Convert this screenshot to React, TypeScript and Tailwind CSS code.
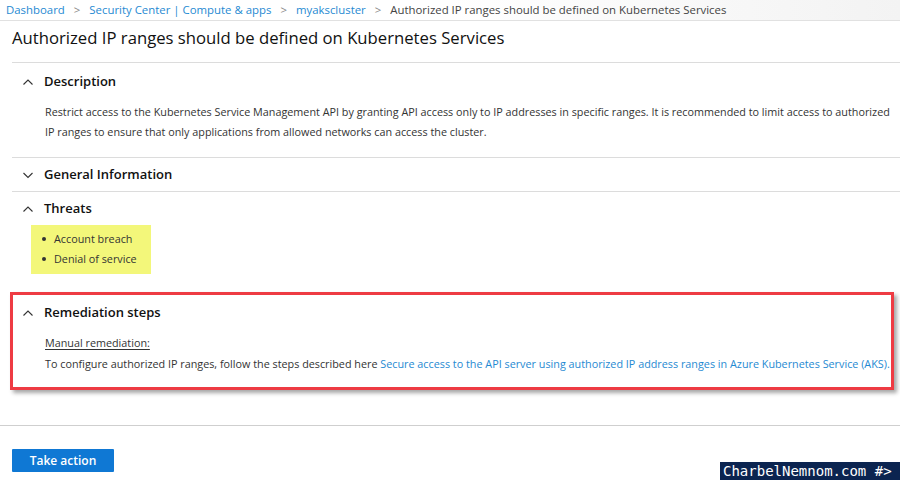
import { ReactNode } from 'react';

function Chevron({ up }: { up: boolean }) {
  return (
    <svg width="12" height="12" viewBox="0 0 12 12" className="shrink-0">
      <path
        d={up ? 'M1.5 8.5 L6 4 L10.5 8.5' : 'M1.5 4 L6 8.5 L10.5 4'}
        fill="none"
        stroke="#333"
        strokeWidth="1.1"
      />
    </svg>
  );
}

function SectionHeader({ title, up = true }: { title: string; up?: boolean }) {
  return (
    <div className="flex items-center gap-[10px] pl-[10px] h-[33px]">
      <Chevron up={up} />
      <span className="text-[13px] font-semibold text-[#111]">{title}</span>
    </div>
  );
}

function Section({ children, last = false }: { children: ReactNode; last?: boolean }) {
  return <div className={last ? '' : 'border-b border-[#dcdcdc]'}>{children}</div>;
}

export default function App() {
  return (
    <div
      className="w-[900px] h-[480px] bg-white overflow-hidden relative text-[#323130]"
      style={{ fontFamily: '"Segoe UI", "Open Sans", "Noto Sans", sans-serif' }}
    >
      {/* breadcrumb */}
      <div className="h-[21px] flex items-center gap-[9px] px-[6px] text-[11.4px] border-b border-[#e1e1e1] bg-gradient-to-r from-white via-white to-[#f3f3f3]">
        <span className="text-[#1f8ad2]">Dashboard</span>
        <span className="text-[#888]">&gt;</span>
        <span className="text-[#1f8ad2]">Security Center | Compute &amp; apps</span>
        <span className="text-[#888]">&gt;</span>
        <span className="text-[#1f8ad2]">myakscluster</span>
        <span className="text-[#888]">&gt;</span>
        <span className="text-[#444]">Authorized IP ranges should be defined on Kubernetes Services</span>
      </div>

      <h1 className="pl-[12px] pt-[4px] h-[41px] text-[16.7px] text-[#111]">
        Authorized IP ranges should be defined on Kubernetes Services
      </h1>

      <div className="ml-[12px] border-t border-[#dcdcdc]">
        <Section>
          <div className="pt-[2px]">
            <SectionHeader title="Description" />
          </div>
          <div className="pl-[33px] pr-[8px] pt-[4px] pb-[15px] text-[10.8px] leading-[20px] text-[#333]">
            Restrict access to the Kubernetes Service Management API by granting API access only to IP addresses in specific ranges. It is recommended to limit access to authorized IP ranges to ensure that only applications from allowed networks can access the cluster.
          </div>
        </Section>
        <Section>
          <SectionHeader title="General Information" up={false} />
        </Section>
        <Section last>
          <SectionHeader title="Threats" />
          <div className="ml-[19px] w-[120px] bg-[#f3f77a] pt-[4px] pb-[5px] pl-[11px] text-[10.8px] leading-[20px] text-[#333]">
            <div className="flex items-center gap-[8px]">
              <span className="w-[4px] h-[4px] rounded-full bg-[#333]" />
              Account breach
            </div>
            <div className="flex items-center gap-[8px]">
              <span className="w-[4px] h-[4px] rounded-full bg-[#333]" />
              Denial of service
            </div>
          </div>
        </Section>
      </div>

      {/* highlighted remediation */}
      <div className="mt-[18px] ml-[10px] w-[884px] h-[98px] border-[3px] border-[#ee3b43] shadow-[3px_3px_4px_rgba(0,0,0,0.35)]">
        <div className="-ml-[1px] pt-[1px]">
          <SectionHeader title="Remediation steps" />
        </div>
        <div className="pl-[32px] pt-[3px] text-[10.8px] leading-[21px] text-[#333]">
          <div className="underline underline-offset-2">Manual remediation:</div>
          <div>
            To configure authorized IP ranges, follow the steps described here{' '}
            <span className="text-[#1f8ad2]">
              Secure access to the API server using authorized IP address ranges in Azure Kubernetes Service (AKS).
            </span>
          </div>
        </div>
      </div>

      <div className="mt-[35px] border-t border-[#cfcfcf]" />

      <button className="mt-[23px] ml-[12px] w-[102px] h-[23px] bg-[#0f78d4] text-white text-[12px] font-semibold rounded-[1px]">
        Take action
      </button>

      {/* watermark */}
      <div
        className="absolute right-0 bottom-0 w-[180px] h-[18px] bg-[#0b2450] text-white text-[14px] leading-[18px] pl-[3px] whitespace-nowrap"
        style={{ fontFamily: '"DejaVu Sans Mono", monospace' }}
      >
        CharbelNemnom.com #&gt;
      </div>
    </div>
  );
}
